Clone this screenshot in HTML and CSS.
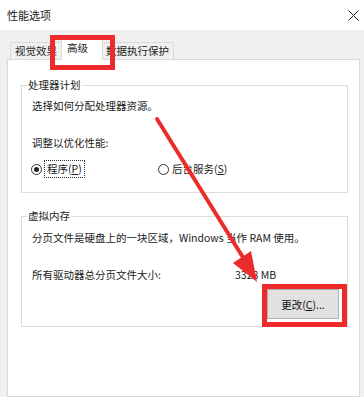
FILE: index.html
```html
<!DOCTYPE html>
<html>
<head>
<meta charset="utf-8">
<link rel="stylesheet" href="styles.css">
</head>
<body>
<div class="titlebar">
  <span class="title">性能选项</span>
  <svg class="close" width="11" height="11" viewBox="0 0 11 11"><path d="M0.5 0.5 L10.5 10.5 M10.5 0.5 L0.5 10.5" stroke="#222" stroke-width="1"/></svg>
</div>
<div class="tabs">
  <div class="tab">视觉效果</div>
  <div class="tab active">高级</div>
  <div class="tab">数据执行保护</div>
</div>
<div class="panel">
  <fieldset class="group g1">
    <legend>处理器计划</legend>
    <p class="line">选择如何分配处理器资源。</p>
    <p class="line l2">调整以优化性能:</p>
    <div class="radios">
      <div class="radio-item first"><span class="radio checked"></span><span class="focus">程序(<u>P</u>)</span></div>
      <div class="radio-item"><span class="radio"></span><span class="rlabel">后台服务(<u>S</u>)</span></div>
    </div>
  </fieldset>
  <fieldset class="group g2">
    <legend>虚拟内存</legend>
    <p class="line">分页文件是硬盘上的一块区域，Windows 当作 RAM 使用。</p>
    <div class="line l2 sizerow"><span>所有驱动器总分页文件大小:</span><span>3328 MB</span></div>
    <div class="btnrow"><button class="btn">更改(<u>C</u>)...</button></div>
  </fieldset>
</div>
<div class="mark mark-tab"></div>
<div class="mark mark-btn"></div>
<svg class="arrow" width="364" height="397" viewBox="0 0 364 397">
  <line x1="157" y1="119" x2="244" y2="259" stroke="#ec2b2b" stroke-width="4" stroke-linecap="round"/>
  <polygon points="257,282 251,251 233,263" fill="#ec2b2b"/>
</svg>
</body>
</html>
```
FILE: styles.css
```css
html, body {
  margin: 0;
  padding: 0;
}
body {
  position: relative;
  width: 364px;
  height: 397px;
  overflow: hidden;
  background: #f0f0f0;
  font-family: "Noto Sans CJK SC", "Noto Sans", sans-serif;
  font-size: 10.5px;
  color: #1a1a1a;
}
.titlebar {
  height: 30px;
  background: #fff;
  display: flex;
  align-items: center;
  justify-content: space-between;
  padding: 0 5px 0 7px;
}
.title {
  font-size: 11px;
  line-height: 14px;
}
.tabs {
  display: flex;
  align-items: flex-end;
  height: 29px;
  padding-left: 10px;
  position: relative;
  z-index: 1;
}
.tab {
  height: 16px;
  line-height: 16px;
  padding: 0 4px;
  border: 1px solid #d9d9d9;
  border-bottom: none;
  background: #f0f0f0;
  color: #222;
}
.tab.active {
  height: 20px;
  line-height: 15px;
  background: #fff;
  padding: 0 14px 0 5px;
  margin: 0 -1px -1px -1px;
  position: relative;
}
.tab + .tab:not(.active) {
  border-left: none;
}
.panel {
  margin: 0 4px 0 7px;
  height: 338px;
  background: #fff;
  border: 1px solid #d9d9d9;
  box-sizing: border-box;
  padding: 0 11px 0 13px;
}
.group {
  margin: 0;
  border: 1px solid #dcdcdc;
  padding: 0 8px 0 10px;
  min-width: 0;
}
.group legend {
  padding: 0 1px;
  margin-left: -5px;
  line-height: 14px;
  color: #222;
}
.g1 {
  margin-top: 18px;
  padding-top: 7px;
  padding-bottom: 14px;
}
.g2 {
  margin-top: 16px;
  padding-top: 8px;
  padding-bottom: 7px;
}
.line {
  margin: 0;
  line-height: 14px;
  white-space: nowrap;
}
.l2 {
  margin-top: 23px;
}
.radios {
  display: flex;
  align-items: center;
  margin-top: 10px;
  height: 18px;
}
.radio-item {
  display: flex;
  align-items: center;
}
.radio-item.first {
  width: 127px;
  margin-left: -1px;
}
.radio {
  width: 11px;
  height: 11px;
  border: 1px solid #333;
  border-radius: 50%;
  box-sizing: border-box;
  display: flex;
  align-items: center;
  justify-content: center;
  margin-right: 3px;
}
.radio.checked::after {
  content: "";
  width: 5px;
  height: 5px;
  border-radius: 50%;
  background: #222;
}
.focus {
  outline: 1px dotted #333;
  padding: 1px 2px;
  line-height: 14px;
}
.rlabel {
  line-height: 14px;
}
.sizerow {
  display: grid;
  grid-template-columns: 203px auto;
}
.btnrow {
  display: flex;
  justify-content: flex-end;
  margin-top: 7px;
}
.btn {
  width: 72px;
  height: 30px;
  background: #e1e1e1;
  border: 1px solid #adadad;
  font-family: inherit;
  font-size: 10.5px;
  color: #111;
  padding: 0;
}
.mark {
  position: absolute;
  border: 5px solid #ee2a2a;
  box-sizing: border-box;
  z-index: 2;
}
.mark-tab {
  left: 50px;
  top: 35px;
  width: 65px;
  height: 35px;
}
.mark-btn {
  left: 262px;
  top: 284px;
  width: 85px;
  height: 43px;
}
.arrow {
  position: absolute;
  left: 0;
  top: 0;
  z-index: 3;
  pointer-events: none;
}
```
